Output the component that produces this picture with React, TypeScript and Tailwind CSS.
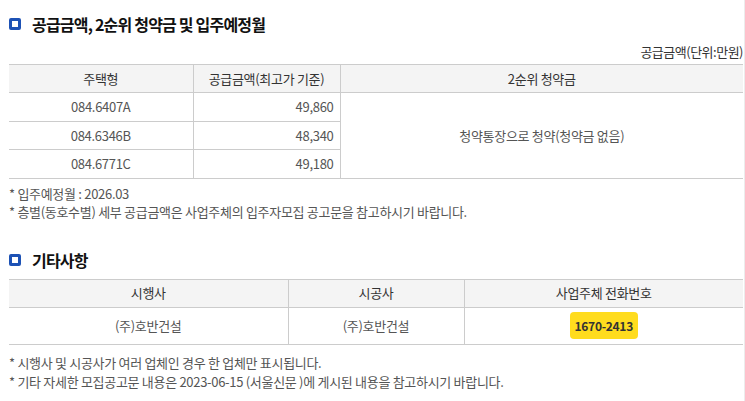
const font = { fontFamily: '"Noto Sans CJK KR", "Noto Sans", sans-serif' };

const SectionTitle = ({ children }: { children: React.ReactNode }) => (
  <div className="flex items-center gap-[11px] h-[24px]">
    <span className="w-[12px] h-[12px] rounded-[2px] border-[3px] border-[#1d52b5] bg-white" />
    <h2 className="text-[16px] font-bold text-[#111] tracking-[-0.8px] leading-[24px]">{children}</h2>
  </div>
);

const supply = [
  { type: "084.6407A", price: "49,860" },
  { type: "084.6346B", price: "48,340" },
  { type: "084.6771C", price: "49,180" },
];

export default function App() {
  return (
    <div className="w-[745px] min-h-[401px] bg-white pl-[9px] pr-[1px] pt-[12px] border-r border-[#ececec]" style={font}>
      {/* 공급금액 섹션 */}
      <SectionTitle>공급금액, 2순위 청약금 및 입주예정월</SectionTitle>
      <div className="mt-[7px] mb-[3px] text-right text-[13px] leading-[18px] text-[#333] tracking-[-0.5px]">
        공급금액(단위:만원)
      </div>
      <table className="w-full border-collapse table-fixed text-[13px] tracking-[-0.3px]">
        <colgroup>
          <col className="w-[184px]" />
          <col className="w-[147px]" />
          <col />
        </colgroup>
        <thead>
          <tr className="h-[28px] bg-[#f4f4f4] text-[#333] border-t border-b border-[#cccccc]">
            <th className="font-normal border-r border-[#cccccc]">주택형</th>
            <th className="font-normal border-r border-[#cccccc]">공급금액(최고가 기준)</th>
            <th className="font-normal">2순위 청약금</th>
          </tr>
        </thead>
        <tbody className="text-[#555]">
          {supply.map((row, i) => (
            <tr key={row.type} className="h-[28.5px] border-b border-[#cccccc]">
              <td className="text-center border-r border-[#cccccc]">{row.type}</td>
              <td className="text-right pr-[6px] border-r border-[#cccccc]">{row.price}</td>
              {i === 0 && (
                <td rowSpan={3} className="text-center">
                  청약통장으로 청약(청약금 없음)
                </td>
              )}
            </tr>
          ))}
        </tbody>
      </table>
      <div className="mt-[6px] text-[13px] leading-[18px] text-[#555] tracking-[-0.3px]">
        <p>* 입주예정월 : 2026.03</p>
        <p>* 층별(동호수별) 세부 공급금액은 사업주체의 입주자모집 공고문을 참고하시기 바랍니다.</p>
      </div>

      {/* 기타사항 섹션 */}
      <div className="mt-[27px]">
        <SectionTitle>기타사항</SectionTitle>
      </div>
      <table className="mt-[7px] w-full border-collapse table-fixed text-[13px] tracking-[-0.3px]">
        <colgroup>
          <col className="w-[279px]" />
          <col className="w-[176px]" />
          <col />
        </colgroup>
        <thead>
          <tr className="h-[28px] bg-[#f4f4f4] text-[#333] border-t border-b border-[#cccccc]">
            <th className="font-normal border-r border-[#cccccc]">시행사</th>
            <th className="font-normal border-r border-[#cccccc]">시공사</th>
            <th className="font-normal">사업주체 전화번호</th>
          </tr>
        </thead>
        <tbody className="text-[#555]">
          <tr className="h-[37px] border-b border-[#cccccc]">
            <td className="text-center border-r border-[#cccccc]">(주)호반건설</td>
            <td className="text-center border-r border-[#cccccc]">(주)호반건설</td>
            <td className="text-center">
              <span className="inline-flex items-center justify-center h-[27px] px-[5px] rounded-[4px] bg-[#ffdc1e] text-[12px] font-bold text-[#333] tracking-[-0.3px]">
                1670-2413
              </span>
            </td>
          </tr>
        </tbody>
      </table>
      <div className="mt-[8px] text-[13px] leading-[19px] text-[#555] tracking-[-0.3px]">
        <p>* 시행사 및 시공사가 여러 업체인 경우 한 업체만 표시됩니다.</p>
        <p>* 기타 자세한 모집공고문 내용은 2023-06-15 (서울신문 )에 게시된 내용을 참고하시기 바랍니다.</p>
      </div>
    </div>
  );
}
